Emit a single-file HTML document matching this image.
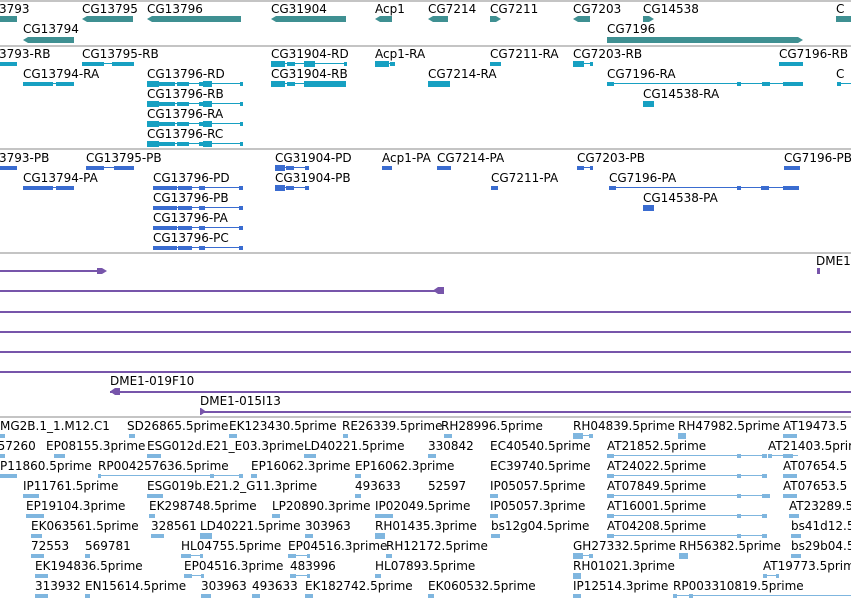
<!DOCTYPE html>
<html><head><meta charset="utf-8"><style>
body{margin:0;width:851px;height:601px;overflow:hidden;background:#fff;position:relative;font-family:"DejaVu Sans","Liberation Sans",sans-serif}
.t{position:absolute;font-size:12px;line-height:14px;white-space:nowrap;color:#000}
.s{position:absolute;left:0;width:851px;height:2px;background:#c4c4c4}
.bar{position:absolute;height:6px;background:#3f9092}
.L{clip-path:polygon(5px 0,100% 0,100% 100%,5px 100%,0 50%)}
.R{clip-path:polygon(0 0,calc(100% - 5px) 0,100% 50%,calc(100% - 5px) 100%,0 100%)}
.g{position:absolute;height:6px}
.g i{position:absolute;top:0;height:6px;background:inherit}
.c1{--c:#17a0c2}
.c2{--c:#3a6cd0}
.c3{--c:#7fb6df}
.g{background:linear-gradient(to bottom,transparent 2px,var(--c) 2px,var(--c) 3px,transparent 3px)}
.g i{background:var(--c)}
.g i.a{top:1px;height:4px}
.p{position:absolute;height:2px;background:#7755aa}
.pb{position:absolute;background:#7755aa}
</style></head><body>

<!-- separators -->
<div class="s" style="top:0"></div>
<div class="s" style="top:45px"></div>
<div class="s" style="top:148px"></div>
<div class="s" style="top:252px"></div>
<div class="s" style="top:416px"></div>

<!-- genes -->
<div class="t" style="left:-1px;top:2px">3793</div>
<div class="bar" style="left:0;top:16px;width:17px"></div>
<div class="t" style="left:82px;top:2px">CG13795</div>
<div class="bar L" style="left:82px;top:16px;width:51px"></div>
<div class="t" style="left:147px;top:2px">CG13796</div>
<div class="bar L" style="left:147px;top:16px;width:94px"></div>
<div class="t" style="left:271px;top:2px">CG31904</div>
<div class="bar L" style="left:271px;top:16px;width:75px"></div>
<div class="t" style="left:375px;top:2px">Acp1</div>
<div class="bar L" style="left:375px;top:16px;width:17px"></div>
<div class="t" style="left:428px;top:2px">CG7214</div>
<div class="bar L" style="left:428px;top:16px;width:20px"></div>
<div class="t" style="left:490px;top:2px">CG7211</div>
<div class="bar R" style="left:490px;top:16px;width:11px"></div>
<div class="t" style="left:573px;top:2px">CG7203</div>
<div class="bar L" style="left:573px;top:16px;width:17px"></div>
<div class="t" style="left:643px;top:2px">CG14538</div>
<div class="bar R" style="left:643px;top:16px;width:11px"></div>
<div class="t" style="left:836px;top:2px">C</div>
<div class="bar" style="left:836px;top:16px;width:15px"></div>
<div class="t" style="left:23px;top:22px">CG13794</div>
<div class="bar L" style="left:23px;top:37px;width:51px"></div>
<div class="t" style="left:607px;top:22px">CG7196</div>
<div class="bar R" style="left:607px;top:37px;width:196px"></div>

<!-- transcripts -->
<div class="t" style="left:-1px;top:47px">3793-RB</div>
<div class="g c1" style="left:0;top:61px;width:17px"><i style="left:0;width:17px" class="a"></i></div>
<div class="t" style="left:82px;top:47px">CG13795-RB</div>
<div class="g c1" style="left:82px;top:61px;width:52px"><i class="a" style="left:0;width:22px"></i><i class="a" style="left:30px;width:22px"></i></div>
<div class="t" style="left:271px;top:47px">CG31904-RD</div>
<div class="g c1" style="left:271px;top:61px;width:76px"><i style="left:0;width:14px"></i><i class="a" style="left:16px;width:8px"></i><i style="left:33px;width:11px"></i><i class="a" style="left:73px;width:3px"></i></div>
<div class="t" style="left:375px;top:47px">Acp1-RA</div>
<div class="g c1" style="left:375px;top:61px;width:20px"><i style="left:0;width:14px"></i><i class="a" style="left:15px;width:5px"></i></div>
<div class="t" style="left:490px;top:47px">CG7211-RA</div>
<div class="g c1" style="left:490px;top:61px;width:11px"><i class="a" style="left:0;width:11px"></i></div>
<div class="t" style="left:573px;top:47px">CG7203-RB</div>
<div class="g c1" style="left:573px;top:61px;width:20px"><i style="left:0;width:11px"></i><i class="a" style="left:17px;width:3px"></i></div>
<div class="t" style="left:779px;top:47px">CG7196-RB</div>
<div class="g c1" style="left:779px;top:61px;width:24px"><i class="a" style="left:0;width:24px"></i></div>

<div class="t" style="left:23px;top:67px">CG13794-RA</div>
<div class="g c1" style="left:23px;top:81px;width:51px"><i class="a" style="left:0;width:30px"></i><i class="a" style="left:33px;width:18px"></i></div>
<div class="t" style="left:147px;top:67px">CG13796-RD</div>
<div class="t" style="left:271px;top:67px">CG31904-RB</div>
<div class="g c1" style="left:271px;top:81px;width:75px"><i style="left:0;width:14px"></i><i class="a" style="left:16px;width:8px"></i><i style="left:33px;width:42px"></i></div>
<div class="t" style="left:428px;top:67px">CG7214-RA</div>
<div class="g c1" style="left:428px;top:81px;width:22px"><i style="left:0;width:22px"></i></div>
<div class="t" style="left:607px;top:67px">CG7196-RA</div>
<div class="g c1" style="left:607px;top:81px;width:196px"><i class="a" style="left:0;width:7px"></i><i class="a" style="left:130px;width:4px"></i><i class="a" style="left:155px;width:8px"></i><i class="a" style="left:176px;width:20px"></i></div>
<div class="t" style="left:836px;top:67px">C</div>
<div class="g c1" style="left:837px;top:81px;width:14px"><i class="a" style="left:0;width:4px"></i></div>
<div class="t" style="left:643px;top:87px">CG14538-RA</div>
<div class="g c1" style="left:643px;top:101px;width:11px"><i style="left:0;width:11px"></i></div>

<div class="t" style="left:147px;top:87px">CG13796-RB</div>
<div class="t" style="left:147px;top:107px">CG13796-RA</div>
<div class="t" style="left:147px;top:127px">CG13796-RC</div>
<div class="g c1" style="left:147px;top:81px;width:96px"><i style="left:0;width:12px"></i><i class="a" style="left:12px;width:16px"></i><i class="a" style="left:30px;width:12px"></i><i class="a" style="left:52px;width:4px"></i><i style="left:56px;width:9px"></i><i class="a" style="left:93px;width:3px"></i></div>
<div class="g c1" style="left:147px;top:101px;width:96px"><i style="left:0;width:12px"></i><i class="a" style="left:12px;width:16px"></i><i class="a" style="left:30px;width:12px"></i><i class="a" style="left:52px;width:4px"></i><i style="left:56px;width:9px"></i><i class="a" style="left:93px;width:3px"></i></div>
<div class="g c1" style="left:147px;top:121px;width:96px"><i style="left:0;width:12px"></i><i class="a" style="left:12px;width:16px"></i><i class="a" style="left:30px;width:12px"></i><i class="a" style="left:52px;width:4px"></i><i style="left:56px;width:9px"></i><i class="a" style="left:93px;width:3px"></i></div>
<div class="g c1" style="left:147px;top:141px;width:96px"><i style="left:0;width:12px"></i><i class="a" style="left:12px;width:16px"></i><i class="a" style="left:30px;width:12px"></i><i class="a" style="left:52px;width:4px"></i><i style="left:56px;width:9px"></i><i class="a" style="left:93px;width:3px"></i></div>

<!-- proteins -->
<div class="t" style="left:-1px;top:151px">3793-PB</div>
<div class="g c2" style="left:0;top:165px;width:17px"><i class="a" style="left:0;width:17px"></i></div>
<div class="t" style="left:86px;top:151px">CG13795-PB</div>
<div class="g c2" style="left:86px;top:165px;width:48px"><i class="a" style="left:0;width:18px"></i><i class="a" style="left:28px;width:20px"></i></div>
<div class="t" style="left:275px;top:151px">CG31904-PD</div>
<div class="g c2" style="left:275px;top:165px;width:34px"><i style="left:0;width:10px"></i><i class="a" style="left:11px;width:8px"></i><i class="a" style="left:30px;width:4px"></i></div>
<div class="t" style="left:382px;top:151px">Acp1-PA</div>
<div class="g c2" style="left:382px;top:165px;width:10px"><i class="a" style="left:0;width:10px"></i></div>
<div class="t" style="left:437px;top:151px">CG7214-PA</div>
<div class="g c2" style="left:437px;top:165px;width:14px"><i class="a" style="left:0;width:14px"></i></div>
<div class="t" style="left:577px;top:151px">CG7203-PB</div>
<div class="g c2" style="left:577px;top:165px;width:16px"><i class="a" style="left:0;width:7px"></i><i class="a" style="left:13px;width:3px"></i></div>
<div class="t" style="left:784px;top:151px">CG7196-PB</div>
<div class="g c2" style="left:784px;top:165px;width:16px"><i class="a" style="left:0;width:16px"></i></div>

<div class="t" style="left:23px;top:171px">CG13794-PA</div>
<div class="g c2" style="left:23px;top:185px;width:51px"><i class="a" style="left:0;width:30px"></i><i class="a" style="left:33px;width:18px"></i></div>
<div class="t" style="left:153px;top:171px">CG13796-PD</div>
<div class="t" style="left:275px;top:171px">CG31904-PB</div>
<div class="g c2" style="left:275px;top:185px;width:34px"><i style="left:0;width:10px"></i><i class="a" style="left:11px;width:8px"></i><i class="a" style="left:30px;width:4px"></i></div>
<div class="t" style="left:491px;top:171px">CG7211-PA</div>
<div class="g c2" style="left:491px;top:185px;width:7px"><i class="a" style="left:0;width:7px"></i></div>
<div class="t" style="left:609px;top:171px">CG7196-PA</div>
<div class="g c2" style="left:609px;top:185px;width:190px"><i class="a" style="left:0;width:7px"></i><i class="a" style="left:128px;width:4px"></i><i class="a" style="left:152px;width:8px"></i><i class="a" style="left:174px;width:16px"></i></div>
<div class="t" style="left:643px;top:191px">CG14538-PA</div>
<div class="g c2" style="left:643px;top:205px;width:11px"><i style="left:0;width:11px"></i></div>
<div class="t" style="left:153px;top:191px">CG13796-PB</div>
<div class="t" style="left:153px;top:211px">CG13796-PA</div>
<div class="t" style="left:153px;top:231px">CG13796-PC</div>
<div class="g c2" style="left:153px;top:185px;width:90px"><i class="a" style="left:0;width:24px"></i><i class="a" style="left:25px;width:14px"></i><i class="a" style="left:46px;width:6px"></i><i class="a" style="left:86px;width:4px"></i></div>
<div class="g c2" style="left:153px;top:205px;width:90px"><i class="a" style="left:0;width:24px"></i><i class="a" style="left:25px;width:14px"></i><i class="a" style="left:46px;width:6px"></i><i class="a" style="left:86px;width:4px"></i></div>
<div class="g c2" style="left:153px;top:225px;width:90px"><i class="a" style="left:0;width:24px"></i><i class="a" style="left:25px;width:14px"></i><i class="a" style="left:46px;width:6px"></i><i class="a" style="left:86px;width:4px"></i></div>
<div class="g c2" style="left:153px;top:245px;width:90px"><i class="a" style="left:0;width:24px"></i><i class="a" style="left:25px;width:14px"></i><i class="a" style="left:46px;width:6px"></i><i class="a" style="left:86px;width:4px"></i></div>

<!-- purple clones -->
<div class="t" style="left:816px;top:254px">DME1</div>
<div class="pb" style="left:817px;top:268px;width:3px;height:6px"></div>
<div class="p" style="left:0;top:270px;width:103px"></div>
<div class="pb R" style="left:97px;top:268px;width:10px;height:6px"></div>
<div class="p" style="left:0;top:290px;width:440px"></div>
<div class="pb L" style="left:433px;top:287px;width:11px;height:7px"></div>
<div class="p" style="left:0;top:311px;width:851px"></div>
<div class="p" style="left:0;top:331px;width:851px"></div>
<div class="p" style="left:0;top:351px;width:851px"></div>
<div class="p" style="left:0;top:371px;width:851px"></div>
<div class="t" style="left:110px;top:374px">DME1-019F10</div>
<div class="p" style="left:110px;top:391px;width:741px"></div>
<div class="pb L" style="left:110px;top:388px;width:10px;height:7px"></div>
<div class="t" style="left:200px;top:394px">DME1-015I13</div>
<div class="p" style="left:200px;top:411px;width:651px"></div>
<div class="pb R" style="left:200px;top:408px;width:6px;height:7px"></div>

<!-- ESTs -->
<div class="t" style="left:0;top:419px">MG2B.1_1.M12.C1</div>
<div class="t" style="left:127px;top:419px">SD26865.5prime</div>
<div class="t" style="left:229px;top:419px">EK123430.5prime</div>
<div class="t" style="left:342px;top:419px">RE26339.5prime</div>
<div class="t" style="left:441px;top:419px">RH28996.5prime</div>
<div class="t" style="left:573px;top:419px">RH04839.5prime</div>
<div class="t" style="left:678px;top:419px">RH47982.5prime</div>
<div class="t" style="left:783px;top:419px">AT19473.5</div>
<div class="g c3" style="left:0;top:433px;width:5px"><i class="a" style="left:0;width:5px"></i></div>
<div class="g c3" style="left:129px;top:433px;width:6px"><i class="a" style="left:0;width:6px"></i></div>
<div class="g c3" style="left:229px;top:433px;width:8px"><i class="a" style="left:0;width:8px"></i></div>
<div class="g c3" style="left:343px;top:433px;width:5px"><i class="a" style="left:0;width:5px"></i></div>
<div class="g c3" style="left:444px;top:433px;width:8px"><i class="a" style="left:0;width:8px"></i></div>
<div class="g c3" style="left:573px;top:433px;width:20px"><i style="left:0;width:10px"></i><i class="a" style="left:16px;width:4px"></i></div>
<div class="g c3" style="left:678px;top:433px;width:8px"><i style="left:0;width:8px"></i></div>
<div class="g c3" style="left:783px;top:433px;width:14px"><i class="a" style="left:0;width:14px"></i></div>

<div class="t" style="left:-10px;top:439px">257260</div>
<div class="t" style="left:46px;top:439px">EP08155.3prime</div>
<div class="t" style="left:147px;top:439px">ESG012d.E21_E03.3prime</div>
<div class="t" style="left:304px;top:439px">LD40221.5prime</div>
<div class="t" style="left:428px;top:439px">330842</div>
<div class="t" style="left:490px;top:439px">EC40540.5prime</div>
<div class="t" style="left:607px;top:439px">AT21852.5prime</div>
<div class="t" style="left:768px;top:439px">AT21403.5prime</div>
<div class="g c3" style="left:0;top:453px;width:5px"><i class="a" style="left:0;width:5px"></i></div>
<div class="g c3" style="left:54px;top:453px;width:11px"><i class="a" style="left:0;width:11px"></i></div>
<div class="g c3" style="left:147px;top:453px;width:14px"><i class="a" style="left:0;width:14px"></i></div>
<div class="g c3" style="left:304px;top:453px;width:12px"><i class="a" style="left:0;width:12px"></i></div>
<div class="g c3" style="left:428px;top:453px;width:8px"><i class="a" style="left:0;width:8px"></i></div>
<div class="g c3" style="left:607px;top:453px;width:160px"><i class="a" style="left:0;width:7px"></i><i class="a" style="left:130px;width:4px"></i><i class="a" style="left:155px;width:5px"></i></div>
<div class="g c3" style="left:768px;top:453px;width:30px"><i class="a" style="left:0;width:4px"></i><i class="a" style="left:15px;width:10px"></i></div>

<div class="t" style="left:0;top:459px">P11860.5prime</div>
<div class="t" style="left:98px;top:459px">RP004257636.5prime</div>
<div class="t" style="left:251px;top:459px">EP16062.3prime</div>
<div class="t" style="left:355px;top:459px">EP16062.3prime</div>
<div class="t" style="left:490px;top:459px">EC39740.5prime</div>
<div class="t" style="left:607px;top:459px">AT24022.5prime</div>
<div class="t" style="left:783px;top:459px">AT07654.5</div>
<div class="g c3" style="left:0;top:473px;width:17px"><i class="a" style="left:0;width:17px"></i></div>
<div class="g c3" style="left:98px;top:473px;width:145px"><i class="a" style="left:0;width:3px"></i><i class="a" style="left:112px;width:4px"></i><i class="a" style="left:141px;width:4px"></i></div>
<div class="g c3" style="left:251px;top:473px;width:6px"><i class="a" style="left:0;width:6px"></i></div>
<div class="g c3" style="left:355px;top:473px;width:6px"><i class="a" style="left:0;width:6px"></i></div>
<div class="g c3" style="left:607px;top:473px;width:160px"><i class="a" style="left:0;width:7px"></i><i class="a" style="left:130px;width:4px"></i><i class="a" style="left:155px;width:5px"></i></div>
<div class="g c3" style="left:783px;top:473px;width:14px"><i class="a" style="left:0;width:14px"></i></div>

<div class="t" style="left:23px;top:479px">IP11761.5prime</div>
<div class="t" style="left:147px;top:479px">ESG019b.E21.2_G11.3prime</div>
<div class="t" style="left:355px;top:479px">493633</div>
<div class="t" style="left:428px;top:479px">52597</div>
<div class="t" style="left:490px;top:479px">IP05057.5prime</div>
<div class="t" style="left:607px;top:479px">AT07849.5prime</div>
<div class="t" style="left:783px;top:479px">AT07653.5</div>
<div class="g c3" style="left:23px;top:493px;width:16px"><i class="a" style="left:0;width:16px"></i></div>
<div class="g c3" style="left:147px;top:493px;width:16px"><i class="a" style="left:0;width:16px"></i></div>
<div class="g c3" style="left:355px;top:493px;width:6px"><i class="a" style="left:0;width:6px"></i></div>
<div class="g c3" style="left:490px;top:493px;width:8px"><i class="a" style="left:0;width:8px"></i></div>
<div class="g c3" style="left:607px;top:493px;width:160px"><i class="a" style="left:0;width:7px"></i><i class="a" style="left:130px;width:4px"></i><i class="a" style="left:155px;width:8px"></i></div>
<div class="g c3" style="left:783px;top:493px;width:14px"><i class="a" style="left:0;width:14px"></i></div>

<div class="t" style="left:26px;top:499px">EP19104.3prime</div>
<div class="t" style="left:149px;top:499px">EK298748.5prime</div>
<div class="t" style="left:272px;top:499px">LP20890.3prime</div>
<div class="t" style="left:375px;top:499px">IP02049.5prime</div>
<div class="t" style="left:490px;top:499px">IP05057.3prime</div>
<div class="t" style="left:607px;top:499px">AT16001.5prime</div>
<div class="t" style="left:789px;top:499px">AT23289.5</div>
<div class="g c3" style="left:26px;top:513px;width:18px"><i class="a" style="left:0;width:18px"></i></div>
<div class="g c3" style="left:149px;top:513px;width:6px"><i class="a" style="left:0;width:6px"></i></div>
<div class="g c3" style="left:272px;top:513px;width:8px"><i class="a" style="left:0;width:8px"></i></div>
<div class="g c3" style="left:375px;top:513px;width:18px"><i class="a" style="left:0;width:18px"></i></div>
<div class="g c3" style="left:490px;top:513px;width:8px"><i class="a" style="left:0;width:8px"></i></div>
<div class="g c3" style="left:607px;top:513px;width:160px"><i class="a" style="left:0;width:7px"></i><i class="a" style="left:130px;width:4px"></i><i class="a" style="left:155px;width:5px"></i></div>
<div class="g c3" style="left:789px;top:513px;width:10px"><i class="a" style="left:0;width:10px"></i></div>

<div class="t" style="left:31px;top:519px">EK063561.5prime</div>
<div class="t" style="left:151px;top:519px">328561</div>
<div class="t" style="left:200px;top:519px">LD40221.5prime</div>
<div class="t" style="left:305px;top:519px">303963</div>
<div class="t" style="left:375px;top:519px">RH01435.3prime</div>
<div class="t" style="left:491px;top:519px">bs12g04.5prime</div>
<div class="t" style="left:607px;top:519px">AT04208.5prime</div>
<div class="t" style="left:791px;top:519px">bs41d12.5</div>
<div class="g c3" style="left:31px;top:533px;width:11px"><i class="a" style="left:0;width:11px"></i></div>
<div class="g c3" style="left:151px;top:533px;width:13px"><i class="a" style="left:0;width:13px"></i></div>
<div class="g c3" style="left:200px;top:533px;width:12px"><i style="left:0;width:12px"></i></div>
<div class="g c3" style="left:305px;top:533px;width:8px"><i class="a" style="left:0;width:8px"></i></div>
<div class="g c3" style="left:375px;top:533px;width:10px"><i style="left:0;width:10px"></i></div>
<div class="g c3" style="left:491px;top:533px;width:9px"><i class="a" style="left:0;width:9px"></i></div>
<div class="g c3" style="left:607px;top:533px;width:160px"><i class="a" style="left:0;width:7px"></i><i class="a" style="left:130px;width:4px"></i><i class="a" style="left:155px;width:5px"></i></div>
<div class="g c3" style="left:791px;top:533px;width:10px"><i class="a" style="left:0;width:10px"></i></div>

<div class="t" style="left:31px;top:539px">72553</div>
<div class="t" style="left:85px;top:539px">569781</div>
<div class="t" style="left:181px;top:539px">HL04755.5prime</div>
<div class="t" style="left:288px;top:539px">EP04516.3prime</div>
<div class="t" style="left:386px;top:539px">RH12172.5prime</div>
<div class="t" style="left:573px;top:539px">GH27332.5prime</div>
<div class="t" style="left:679px;top:539px">RH56382.5prime</div>
<div class="t" style="left:791px;top:539px">bs29b04.5</div>
<div class="g c3" style="left:31px;top:553px;width:13px"><i class="a" style="left:0;width:13px"></i></div>
<div class="g c3" style="left:85px;top:553px;width:5px"><i class="a" style="left:0;width:5px"></i></div>
<div class="g c3" style="left:181px;top:553px;width:22px"><i class="a" style="left:0;width:10px"></i><i class="a" style="left:19px;width:3px"></i></div>
<div class="g c3" style="left:288px;top:553px;width:22px"><i class="a" style="left:0;width:8px"></i><i class="a" style="left:19px;width:3px"></i></div>
<div class="g c3" style="left:386px;top:553px;width:6px"><i class="a" style="left:0;width:6px"></i></div>
<div class="g c3" style="left:573px;top:553px;width:20px"><i style="left:0;width:10px"></i><i class="a" style="left:16px;width:4px"></i></div>
<div class="g c3" style="left:679px;top:553px;width:9px"><i style="left:0;width:9px"></i></div>
<div class="g c3" style="left:791px;top:553px;width:10px"><i class="a" style="left:0;width:10px"></i></div>

<div class="t" style="left:35px;top:559px">EK194836.5prime</div>
<div class="t" style="left:184px;top:559px">EP04516.3prime</div>
<div class="t" style="left:290px;top:559px">483996</div>
<div class="t" style="left:375px;top:559px">HL07893.5prime</div>
<div class="t" style="left:573px;top:559px">RH01021.3prime</div>
<div class="t" style="left:763px;top:559px">AT19773.5prime</div>
<div class="g c3" style="left:35px;top:573px;width:13px"><i class="a" style="left:0;width:13px"></i></div>
<div class="g c3" style="left:184px;top:573px;width:20px"><i class="a" style="left:0;width:8px"></i><i class="a" style="left:17px;width:3px"></i></div>
<div class="g c3" style="left:290px;top:573px;width:20px"><i class="a" style="left:0;width:6px"></i><i class="a" style="left:17px;width:3px"></i></div>
<div class="g c3" style="left:375px;top:573px;width:6px"><i class="a" style="left:0;width:6px"></i></div>
<div class="g c3" style="left:573px;top:573px;width:8px"><i style="left:0;width:8px"></i></div>
<div class="g c3" style="left:763px;top:573px;width:16px"><i class="a" style="left:0;width:4px"></i><i class="a" style="left:13px;width:3px"></i></div>

<div class="t" style="left:35px;top:579px">313932</div>
<div class="t" style="left:85px;top:579px">EN15614.5prime</div>
<div class="t" style="left:201px;top:579px">303963</div>
<div class="t" style="left:252px;top:579px">493633</div>
<div class="t" style="left:305px;top:579px">EK182742.5prime</div>
<div class="t" style="left:428px;top:579px">EK060532.5prime</div>
<div class="t" style="left:573px;top:579px">IP12514.3prime</div>
<div class="t" style="left:673px;top:579px">RP003310819.5prime</div>
<div class="g c3" style="left:35px;top:593px;width:13px"><i class="a" style="left:0;width:13px"></i></div>
<div class="g c3" style="left:85px;top:593px;width:5px"><i class="a" style="left:0;width:5px"></i></div>
<div class="g c3" style="left:201px;top:593px;width:10px"><i class="a" style="left:0;width:10px"></i></div>
<div class="g c3" style="left:252px;top:593px;width:8px"><i class="a" style="left:0;width:8px"></i></div>
<div class="g c3" style="left:305px;top:593px;width:8px"><i class="a" style="left:0;width:8px"></i></div>
<div class="g c3" style="left:428px;top:593px;width:6px"><i class="a" style="left:0;width:6px"></i></div>
<div class="g c3" style="left:573px;top:593px;width:8px"><i class="a" style="left:0;width:8px"></i></div>
<div class="g c3" style="left:673px;top:593px;width:178px"><i class="a" style="left:0;width:4px"></i><i class="a" style="left:16px;width:4px"></i></div>

</body></html>
